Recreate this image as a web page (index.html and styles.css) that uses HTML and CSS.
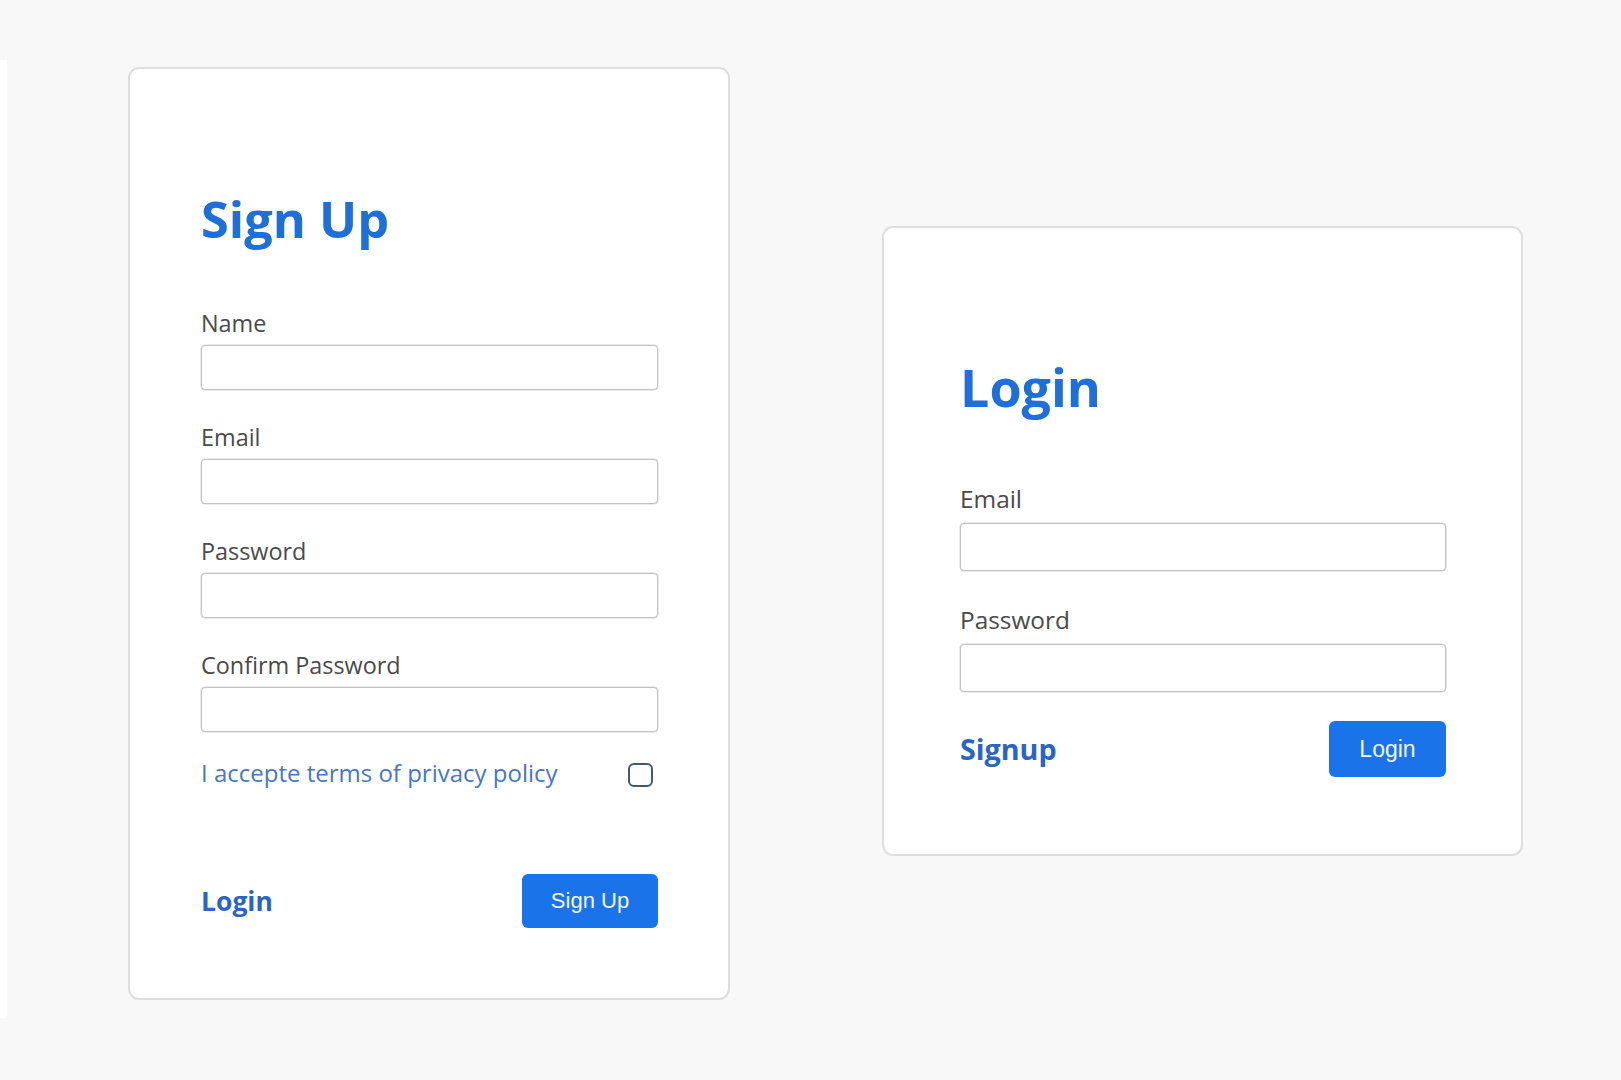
FILE: index.html
```html
<!DOCTYPE html>
<html lang="en">
<head>
<meta charset="utf-8">
<title>Sign Up / Login</title>
<link rel="stylesheet" href="styles.css">
</head>
<body>
<div class="page">
  <div class="edge"></div>

  <form class="card card-signup">
    <h1 class="title">Sign Up</h1>
    <div class="field">
      <label class="label">Name</label>
      <input class="input" type="text">
    </div>
    <div class="field">
      <label class="label">Email</label>
      <input class="input" type="text">
    </div>
    <div class="field">
      <label class="label">Password</label>
      <input class="input" type="password">
    </div>
    <div class="field">
      <label class="label">Confirm Password</label>
      <input class="input" type="password">
    </div>
    <div class="terms">
      <span class="terms-text">I accepte terms of privacy policy</span>
      <span class="check"></span>
    </div>
    <div class="actions actions-signup">
      <a class="link">Login</a>
      <button class="btn" type="button">Sign Up</button>
    </div>
  </form>

  <form class="card card-login">
    <h1 class="title title-login">Login</h1>
    <div class="field field-login">
      <label class="label label-login">Email</label>
      <input class="input input-login" type="text">
    </div>
    <div class="field field-login field-last">
      <label class="label label-login">Password</label>
      <input class="input input-login" type="password">
    </div>
    <div class="actions actions-login">
      <a class="link link-login">Signup</a>
      <button class="btn btn-login" type="button">Login</button>
    </div>
  </form>
</div>
</body>
</html>
```

FILE: styles.css
```css
* { box-sizing: border-box; }

html, body {
  margin: 0;
  padding: 0;
  background: #f8f8f8;
  font-family: "Open Sans", "Noto Sans", sans-serif;
}

.page {
  display: flex;
  align-items: flex-start;
  min-height: 1080px;
}

.edge {
  width: 7px;
  height: 958px;
  margin-top: 60px;
  background: #ffffff;
}

.card {
  background: #ffffff;
  border: 2px solid #dedede;
  border-radius: 11px;
  display: flex;
  flex-direction: column;
}

.card-signup {
  width: 602px;
  margin-left: 121px;
  margin-top: 67px;
  padding: 120px 70px 70px 71px;
}

.card-login {
  width: 641px;
  margin-left: 152px;
  margin-top: 226px;
  padding: 129px 75px 77px 76px;
}

.title {
  margin: 0 0 60px 0;
  font-size: 50.5px;
  line-height: 59px;
  font-weight: 700;
  color: #1e6fd9;
}

.title-login {
  font-size: 52px;
  line-height: 60px;
  margin-bottom: 66px;
}

.field {
  display: flex;
  flex-direction: column;
  margin-bottom: 32px;
}

.field-login {
  margin-bottom: 33px;
}

.field-last {
  margin-bottom: 29px;
}

.label {
  font-size: 23.4px;
  line-height: 31px;
  color: #4a4a4a;
  margin-bottom: 6px;
}

.label-login {
  font-size: 24.4px;
  line-height: 32px;
  margin-bottom: 8px;
}

.input {
  display: block;
  width: 100%;
  height: 45px;
  border: 1px solid #c2c2c2;
  border-radius: 4px;
  background: #ffffff;
  box-shadow: 0 0 0 0.5px #d8d8d8;
  outline: none;
  padding: 0 10px;
}

.input-login {
  height: 48px;
}

.terms {
  display: flex;
  align-items: center;
  justify-content: space-between;
  margin-top: -7px;
}

.terms-text {
  font-size: 24px;
  line-height: 31px;
  color: #4877c0;
}

.check {
  width: 25px;
  height: 24px;
  margin-right: 5px;
  margin-top: 4px;
  border: 2px solid #44586e;
  border-radius: 6px;
  background: #ffffff;
}

.actions {
  display: flex;
  align-items: center;
  justify-content: space-between;
}

.actions-signup {
  margin-top: 86px;
}

.link {
  font-size: 26.5px;
  line-height: 36px;
  font-weight: 700;
  color: #2a65c3;
  text-decoration: none;
  cursor: pointer;
}

.link-login {
  font-size: 28.7px;
  line-height: 38px;
}

.btn {
  font-family: "Liberation Sans", Arial, sans-serif;
  font-size: 22px;
  color: #f2f6fd;
  background: #1a73e8;
  border: none;
  border-radius: 6px;
  width: 136px;
  height: 54px;
  padding: 0;
  cursor: pointer;
}

.btn-login {
  font-size: 23px;
  width: 117px;
  height: 56px;
}
```
